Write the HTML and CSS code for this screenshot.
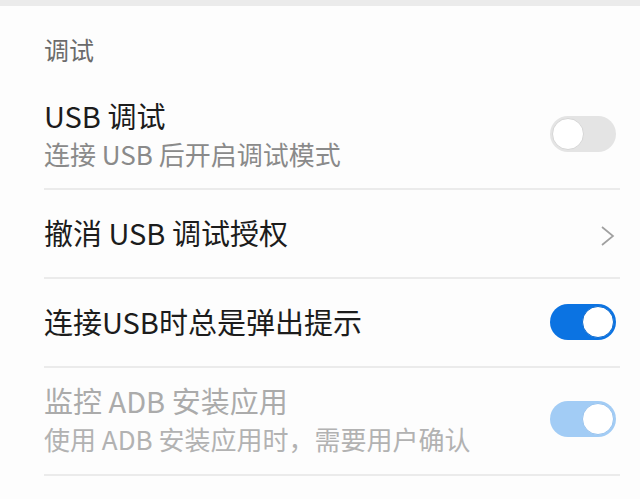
FILE: index.html
```html
<!DOCTYPE html>
<html lang="zh-CN">
<head>
  <meta charset="UTF-8" />
  <title>开发者选项</title>
  <link rel="stylesheet" href="styles.css">
</head>
<body>

  <div class="status-strip"></div>

  <div class="settings">
    <div class="group-title">调试</div>

    <div class="row">
      <div class="text">
        <div class="title">USB 调试</div>
        <div class="summary">连接 USB 后开启调试模式</div>
      </div>
      <div class="switch"><span class="knob"></span></div>
    </div>

    <div class="row single">
      <div class="text">
        <div class="title">撤消 USB 调试授权</div>
      </div>
      <svg class="chevron" width="15" height="22" viewBox="0 0 15 22">
        <polyline points="2,2 13,11 2,20" fill="none" stroke="#a0a0a0" stroke-width="1.7" />
      </svg>
    </div>

    <div class="row single">
      <div class="text">
        <div class="title">连接USB时总是弹出提示</div>
      </div>
      <div class="switch on"><span class="knob"></span></div>
    </div>

    <div class="row disabled">
      <div class="text">
        <div class="title">监控 ADB 安装应用</div>
        <div class="summary">使用 ADB 安装应用时，需要用户确认</div>
      </div>
      <div class="switch on"><span class="knob"></span></div>
    </div>
  </div>

</body>
</html>
```

FILE: styles.css
```css
* {
  margin: 0;
  padding: 0;
  box-sizing: border-box;
}

html, body {
  height: 100%;
  background: #fdfdfd;
  font-family: 'Noto Sans CJK SC', 'Noto Sans', sans-serif;
}

.status-strip {
  height: 6px;
  background: #ebebeb;
}

.settings {
  padding: 0 20px 0 44px;
}

.group-title {
  padding: 26px 0 15px;
  font-size: 25px;
  line-height: 34px;
  color: #6b6b6b;
}

/* Rows */
.row {
  display: flex;
  align-items: center;
  justify-content: space-between;
  padding: 14px 0 15px;
  border-bottom: 2px solid #ebebeb;
}

.row.single {
  padding: 22px 0 25px;
}

.row.disabled {
  padding: 12px 0 16px;
}

.title {
  font-size: 29px;
  line-height: 40px;
  color: #1c1c1c;
}

.summary {
  font-size: 26px;
  line-height: 38px;
  color: #8a8a8a;
}

.row.disabled .title {
  color: #ababab;
}

.row.disabled .summary {
  color: #b2b2b2;
}

.row.single .switch {
  margin-top: 2px;
}

.chevron {
  margin: 8px 5px 0 0;
}

/* Switch */
.switch {
  position: relative;
  width: 66px;
  height: 36px;
  margin-right: 4px;
  border-radius: 18px;
  background: #e4e4e4;
  flex-shrink: 0;
}

.switch .knob {
  position: absolute;
  top: 2px;
  left: 2px;
  width: 32px;
  height: 32px;
  border-radius: 50%;
  background: #ffffff;
  border: 1px solid #d6d6d6;
}

.switch.on {
  background: #0b73e2;
}

.switch.on .knob {
  left: 32px;
  border-color: #0b6ad0;
}

.row.disabled .switch.on {
  background: #a2ccf5;
}

.row.disabled .switch.on .knob {
  border-color: #98c3ee;
}
```
